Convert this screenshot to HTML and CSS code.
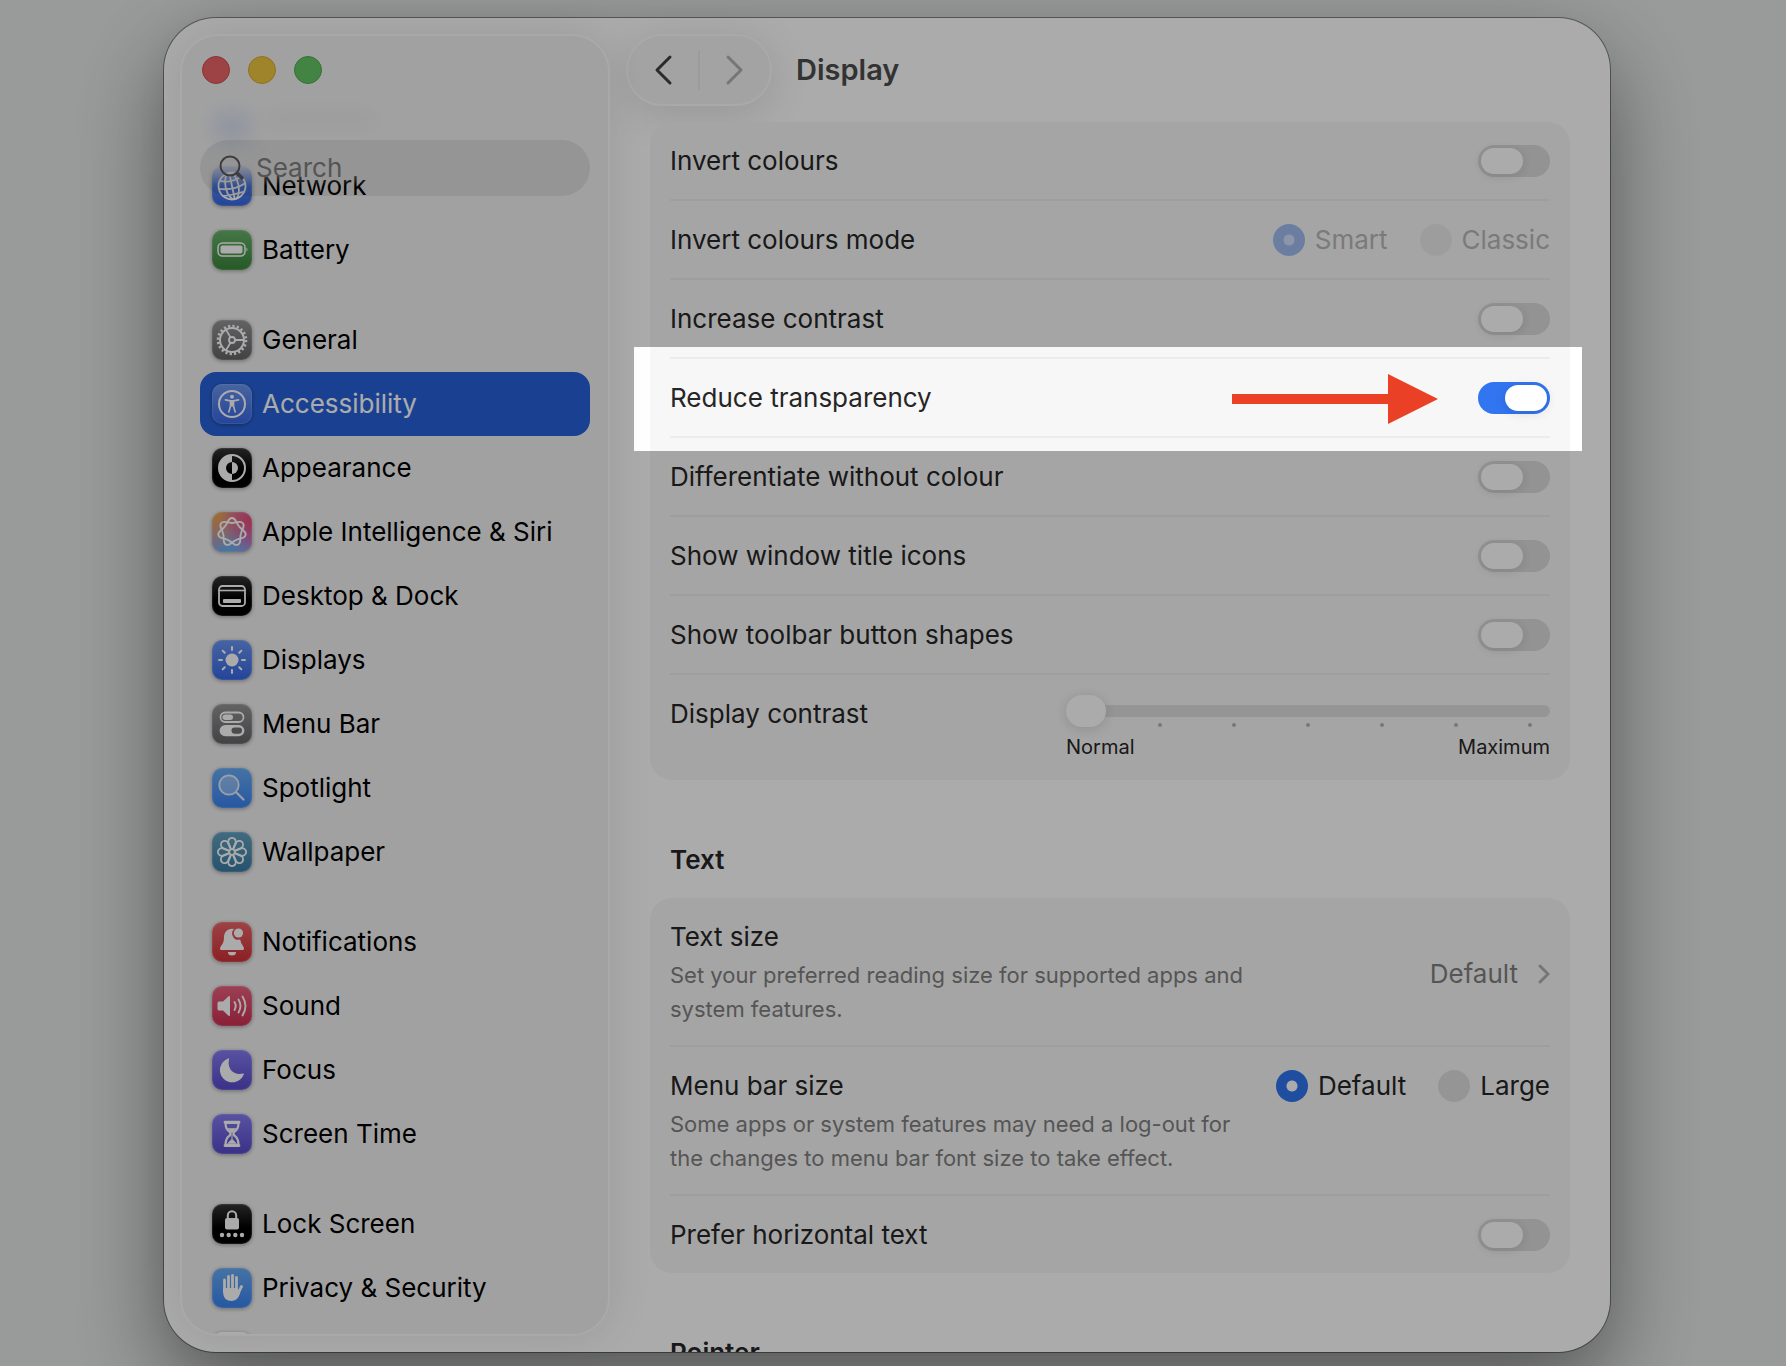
FILE: index.html
```html
<!DOCTYPE html>
<html lang="en-GB">
<head>
<meta charset="utf-8">
<title>Display</title>
<link rel="stylesheet" href="styles.css">
</head>
<body>

<div class="window">

  <aside class="sidebar">
    <div class="sidebar-top">
      <div class="fade"></div>
      <div class="ghost-icon"></div>
      <div class="ghost-text"></div>
      <div class="lights">
        <button class="light red" aria-label="Close"></button>
        <button class="light yellow" aria-label="Minimise"></button>
        <button class="light green" aria-label="Zoom"></button>
      </div>
      <label class="search">
        <svg width="28" height="28" viewBox="0 0 28 28" fill="none" stroke="#5a5a5e" stroke-width="2"><circle cx="12" cy="12" r="9.5"/><path d="M19 19l6 6" stroke-width="3.5"/></svg>
        <input type="search" placeholder="Search" aria-label="Search">
      </label>
    </div>

    <nav class="menu">
      <ul>
        <li><a href="#"><span class="icon blue"><svg viewBox="0 0 40 40" fill="none" stroke="#fff" stroke-width="1.8"><g transform="rotate(-12 20 20)"><circle cx="20" cy="20" r="13.5"/><ellipse cx="20" cy="20" rx="6.5" ry="13.5"/><path d="M20 6.5v27M6.5 20q13.500 5 27 0M9 12.500q11 5 22 0M9 28q11 1 22 0"/></g></svg></span>Network</a></li>
        <li><a href="#"><span class="icon green-tile"><svg viewBox="0 0 40 40"><rect x="6" y="13" width="27" height="13" rx="4.500" fill="none" stroke="#fff" stroke-width="1.500"/><rect x="8.500" y="15.500" width="22" height="8" rx="2" fill="#fff"/><path d="M34.500 17.500q2 2 0 4z" fill="#fff"/></svg></span>Battery</a></li>
      </ul>
      <ul>
        <li><a href="#"><span class="icon gray"><svg viewBox="0 0 40 40" fill="none" stroke="#fff"><circle cx="20" cy="20" r="14" stroke-width="2.600" stroke-dasharray="2.200 2.198"/><circle cx="20" cy="20" r="12" stroke-width="2"/><circle cx="20" cy="20" r="3" stroke-width="1.800"/><path d="M23 20h9M18.500 17.400L14 9.600M18.500 22.600L14 30.400" stroke-width="1.800"/></svg></span>General</a></li>
        <li><a href="#" class="active"><span class="icon blue"><svg viewBox="0 0 40 40" fill="none" stroke="#fff" stroke-linecap="round"><circle cx="20" cy="20" r="13" stroke-width="2"/><circle cx="20" cy="12.800" r="2" fill="#fff" stroke="none"/><path d="M13.500 15.800l5 1h3l5-1" stroke-width="1.800"/><path d="M18.500 17v5l-1.700 6M21.500 17v5l1.700 6" stroke-width="1.600"/><path d="M18 16.500h4l-.5 6h-3z" fill="#fff" stroke="none"/></svg></span>Accessibility</a></li>
        <li><a href="#"><span class="icon black"><svg viewBox="0 0 40 40"><circle cx="20" cy="20" r="13" fill="none" stroke="#fff" stroke-width="2"/><path d="M20 7a13 13 0 0 0 0 26v-7a6 6 0 0 1 0-12z" fill="#fff"/><path d="M20 14a6 6 0 0 1 0 12z" fill="#fff"/></svg></span>Appearance</a></li>
        <li><a href="#"><span class="icon siri"><svg viewBox="-20 -20 40 40" fill="none" stroke="#fff" stroke-width="1.800"><path id="loop" d="M-7.040-5.610C-3.300-10.300-4-14 0-14S3.300-10.300 7.040-5.610"/><use href="#loop" transform="rotate(51.430)"/><use href="#loop" transform="rotate(102.860)"/><use href="#loop" transform="rotate(154.290)"/><use href="#loop" transform="rotate(205.710)"/><use href="#loop" transform="rotate(257.140)"/><use href="#loop" transform="rotate(308.570)"/></svg></span>Apple Intelligence &amp; Siri</a></li>
        <li><a href="#"><span class="icon black"><svg viewBox="0 0 40 40"><rect x="7" y="10" width="26" height="20" rx="3.500" fill="none" stroke="#fff" stroke-width="1.800"/><path d="M7 14.500h26" stroke="#fff" stroke-width="1.600"/><rect x="11" y="23" width="18" height="4" rx="1" fill="#fff"/></svg></span>Desktop &amp; Dock</a></li>
        <li><a href="#"><span class="icon blue"><svg viewBox="-20 -20 40 40" stroke="#fff" stroke-width="2" stroke-linecap="round"><circle r="6.500" fill="#fff" stroke="none"/><path d="M0-10v-3M0 10v3M-10 0h-3M10 0h3M7.200-7.200l2.100-2.100M-7.200-7.200l-2.100-2.100M7.200 7.200l2.100 2.100M-7.200 7.200l-2.100 2.100"/></svg></span>Displays</a></li>
        <li><a href="#"><span class="icon gray"><svg viewBox="0 0 40 40"><rect x="8.500" y="8.500" width="23" height="9.500" rx="4.750" fill="none" stroke="#fff" stroke-width="1.800"/><rect x="10.500" y="10.500" width="10.500" height="5.500" rx="2.750" fill="#fff"/><rect x="7.600" y="21" width="24.800" height="11.200" rx="5.600" fill="#fff"/><rect x="19.500" y="23.500" width="10.500" height="6.200" rx="3.100" fill="#707072"/></svg></span>Menu Bar</a></li>
        <li><a href="#"><span class="icon sky"><svg viewBox="0 0 40 40" stroke="#e4eefa" stroke-width="1.800" stroke-linecap="round"><circle cx="17" cy="17" r="9.700" fill="rgba(255,255,255,.3)"/><path d="M24.500 24.500l7 7" stroke-width="2.200"/></svg></span>Spotlight</a></li>
        <li><a href="#"><span class="icon teal"><svg viewBox="-20 -20 40 40" fill="none" stroke="#fff" stroke-width="1.800"><g id="petals"><path id="petal" d="M-1-3L-3.300-8.500A3.800 3.800 0 1 1 3.300-8.500L1-3"/><use href="#petal" transform="rotate(90)"/><use href="#petal" transform="rotate(180)"/><use href="#petal" transform="rotate(270)"/></g><use href="#petals" transform="rotate(45)"/><circle r="2.800"/></svg></span>Wallpaper</a></li>
      </ul>
      <ul>
        <li><a href="#"><span class="icon crimson"><svg viewBox="0 0 40 40" fill="#fff"><path d="M22 7a8 8 0 0 0-10 8q0 6-3 9-2 3 0 4h22q2-1 0-4-2-2-2.800-6.500A6.300 6.300 0 0 1 22 7zM16 30h8a4 3.500 0 0 1-8 0z"/><circle cx="26.500" cy="11" r="4.600"/></svg></span>Notifications</a></li>
        <li><a href="#"><span class="icon pink"><svg viewBox="0 0 40 40"><path d="M5.500 17q0-1.500 1.500-1.500h4l5.500-5.200q1.500-1 1.500 1v17.400q0 2-1.500 1L11 24.500H7q-1.500 0-1.500-1.500z" fill="#fff"/><path d="M22.500 16q2.400 4 0 8M26.500 13.500q4 6.500 0 13M30.500 10.500q6 9.500 0 19" fill="none" stroke="#fff" stroke-width="1.900" stroke-linecap="round"/></svg></span>Sound</a></li>
        <li><a href="#"><span class="icon purple"><svg viewBox="0 0 40 40"><path d="M16 8.500q1.500-.8 1 1C15 18 21 26 31 23.500q1.500 0 .5 1.500A12.300 12.300 0 1 1 16 8.500z" fill="#fff"/></svg></span>Focus</a></li>
        <li><a href="#"><span class="icon purple"><svg viewBox="0 0 40 40"><path d="M13.500 9h13q0 6-4 8.700-2 1.800 0 4Q26.500 24.500 26.500 31h-13q0-6.500 4-9.300 2-2.200 0-4Q13.500 15 13.500 9z" fill="none" stroke="#fff" stroke-width="2.200"/><path d="M13 8.200h14M13 31.600h14" stroke="#fff" stroke-width="2.800" stroke-linecap="round"/><path d="M16 14.500h8l-4 4.500zM20 20v5l4.500 4.500h-9L20 25z" fill="#fff" stroke="#fff" stroke-width=".6"/></svg></span>Screen Time</a></li>
      </ul>
      <ul>
        <li><a href="#"><span class="icon black"><svg viewBox="0 0 40 40" fill="#fff"><rect x="13" y="14" width="14" height="11.500" rx="2"/><path d="M15.800 15v-3.500a4.200 4.200 0 0 1 8.400 0V15" fill="none" stroke="#fff" stroke-width="2"/><circle cx="10" cy="31" r="2.200"/><circle cx="16.700" cy="31" r="2.200"/><circle cx="23.300" cy="31" r="2.200"/><circle cx="30" cy="31" r="2.200"/></svg></span>Lock Screen</a></li>
        <li><a href="#"><span class="icon sky"><svg viewBox="0 0 40 40" fill="none" stroke="#fff" stroke-width="2.800" stroke-linecap="round"><path d="M12.500 12v12M16.500 8.500v14M20.500 7.500v14M24.500 9.500v14M29.500 18.500l-3.500 7"/><path d="M11.100 20h14.800v5l3-3.500Q27 33 20 33q-8.900 0-8.900-9z" fill="#fff" stroke="none"/></svg></span>Privacy &amp; Security</a></li>
        <li><a href="#" aria-label="Touch ID"><span class="icon white"></span></a></li>
      </ul>
    </nav>
  </aside>

  <main class="content">
    <header class="toolbar">
      <div class="history">
        <button aria-label="Back"><svg width="20" height="32" viewBox="0 0 20 32"><path d="M17 3L4 16l13 13" stroke="#404040"/></svg></button>
        <button aria-label="Forward"><svg width="20" height="32" viewBox="0 0 20 32"><path d="M3 3l13 13L3 29" stroke="#b0b0b0"/></svg></button>
      </div>
      <h1>Display</h1>
    </header>

    <section class="group">
      <div class="row">
        <label for="invert">Invert colours</label>
        <input type="checkbox" class="toggle" id="invert">
      </div>
      <div class="row">
        <span>Invert colours mode</span>
        <div class="radios">
          <label><input type="radio" name="mode" checked disabled>Smart</label>
          <label><input type="radio" name="mode" disabled>Classic</label>
        </div>
      </div>
      <div class="row">
        <label for="contrast">Increase contrast</label>
        <input type="checkbox" class="toggle" id="contrast">
      </div>
      <div class="row focused">
        <label for="transparency">Reduce transparency</label>
        <input type="checkbox" class="toggle" id="transparency" checked>
        <!-- dims everything except this row -->
        <div class="spotlight">
          <svg width="206" height="50" viewBox="0 0 206 50" fill="#ea4025"><path d="M0 20h156V0l50 25-50 25V30H0z"/></svg>
        </div>
      </div>
      <div class="row">
        <label for="differentiate">Differentiate without colour</label>
        <input type="checkbox" class="toggle" id="differentiate">
      </div>
      <div class="row">
        <label for="titleIcons">Show window title icons</label>
        <input type="checkbox" class="toggle" id="titleIcons">
      </div>
      <div class="row">
        <label for="shapes">Show toolbar button shapes</label>
        <input type="checkbox" class="toggle" id="shapes">
      </div>
      <div class="row slider-row">
        <label for="displayContrast">Display contrast</label>
        <div class="slider">
          <input type="range" id="displayContrast" min="0" max="6" value="0">
          <div class="ticks"><i></i><i></i><i></i><i></i><i></i><i></i></div>
          <div class="ends"><span>Normal</span><span>Maximum</span></div>
        </div>
      </div>
    </section>

    <h2>Text</h2>

    <section class="group">
      <div class="row tall">
        <div class="info">
          <div>Text size</div>
          <p>Set your preferred reading size for supported apps and system features.</p>
        </div>
        <button class="value">Default
          <svg width="12" height="20" viewBox="0 0 12 20"><path d="M2 2l8 8-8 8"/></svg>
        </button>
      </div>
      <div class="row tall top">
        <div class="info">
          <div>Menu bar size</div>
          <p>Some apps or system features may need a log-out for the changes to menu bar font size to take effect.</p>
        </div>
        <div class="radios">
          <label><input type="radio" name="size" checked>Default</label>
          <label><input type="radio" name="size">Large</label>
        </div>
      </div>
      <div class="row">
        <label for="horizontal">Prefer horizontal text</label>
        <input type="checkbox" class="toggle" id="horizontal">
      </div>
    </section>

    <div class="rest">
      <h2>Pointer</h2>
    </div>
  </main>

</div>

</body>
</html>
```
FILE: styles.css
```css
* {
  box-sizing: border-box;
}

body {
  margin: 0;
  height: 100vh;
  padding: 18px 176px 14px 164px;
  overflow: hidden;
  background: #e5e7e7;
  font-family: Inter, "Liberation Sans", sans-serif;
  font-size: 26px;
  line-height: 32px;
  color: #262626;
}

button,
input {
  font: inherit;
  margin: 0;
  padding: 0;
  border: none;
  background: none;
}

.window {
  display: flex;
  height: 100%;
  padding: 16px 0 16px 16px;
  border-radius: 52px;
  background: #fff;
  box-shadow: 0 0 0 1px rgba(0, 0, 0, 0.4), 0 36px 90px rgba(0, 0, 0, 0.45);
}

/* sidebar */

.sidebar {
  position: relative;
  flex: none;
  width: 430px;
  padding: 118px 18px 0;
  overflow: hidden;
  border: 2px solid #fcfcfc;
  border-radius: 38px;
  background: #f1f1f1;
  box-shadow: 0 0 44px rgba(0, 0, 0, 0.1);
}

.sidebar-top {
  position: absolute;
  z-index: 1;
  top: 0;
  left: 0;
  right: 0;
  padding: 20px 18px 0;
}

.fade {
  position: absolute;
  inset: 0;
  bottom: 10px;
  background: linear-gradient(#f1f1f1 126px, rgba(241, 241, 241, 0));
}

.ghost-icon,
.ghost-text {
  position: absolute;
  top: 76px;
  left: 32px;
  width: 36px;
  height: 30px;
  background: rgba(60, 110, 230, 0.14);
  filter: blur(10px);
}

.ghost-text {
  left: 84px;
  width: 110px;
  height: 14px;
  background: rgba(0, 0, 0, 0.04);
}

.lights {
  position: relative;
  display: flex;
  gap: 18px;
  padding: 0 2px;
  margin-bottom: 56px;
}

.light {
  width: 28px;
  height: 28px;
  border-radius: 50%;
}

.red {
  background: #ec6467;
  border: 1px solid #d2484c;
}

.yellow {
  background: #efc540;
  border: 1px solid #d8a92a;
}

.green {
  background: #65c466;
  border: 1px solid #48ad4c;
}

.search {
  position: relative;
  display: flex;
  align-items: center;
  gap: 10px;
  height: 56px;
  padding: 0 18px;
  border-radius: 28px;
  background: rgba(0, 0, 0, 0.08);
}

.search input {
  flex: 1;
  min-width: 0;
  outline: none;
}

.search input::placeholder {
  color: #7f7f7f;
  opacity: 1;
}

.menu {
  color: #000;
}

.menu ul {
  list-style: none;
  margin: 0 0 26px;
  padding: 0;
}

.menu a {
  display: flex;
  align-items: center;
  gap: 10px;
  height: 64px;
  padding: 0 12px;
  border-radius: 16px;
  color: inherit;
  text-decoration: none;
}

.menu .active {
  background: #2862d8;
  color: #fff;
}

.icon {
  width: 40px;
  height: 40px;
  border-radius: 10px;
  box-shadow: 0 1px 4px rgba(0, 0, 0, 0.35), inset 0 0 1px 1px rgba(255, 255, 255, 0.15);
}

.icon svg {
  display: block;
}

.blue { background: linear-gradient(#6a95f2, #3767e4); }
.green-tile { background: linear-gradient(#69b269, #38853a); }
.gray { background: linear-gradient(#949496, #636366); }
.black { background: linear-gradient(#363636, #000 60%); }
.sky { background: linear-gradient(#69acf5, #3883f2); }
.teal { background: linear-gradient(#62a0c0, #387ca3); }
.crimson { background: linear-gradient(#ea6468, #cf3035); }
.pink { background: linear-gradient(#e9617f, #cc2f52); }
.purple { background: linear-gradient(#857af0, #574acb); }
.white { background: #fff; }

.siri {
  background:
    radial-gradient(circle at 100% 20%, #e9476f, transparent 60%),
    radial-gradient(circle at 0 0, #f0a73a, transparent 70%),
    radial-gradient(circle at 40% 100%, #63b5ee, transparent 70%),
    #bb80d8;
}

/* content */

.content {
  display: flex;
  flex-direction: column;
  flex: 1;
  min-width: 0;
  margin-bottom: -16px;
  padding: 0 40px;
}

.toolbar {
  display: flex;
  align-items: center;
  gap: 24px;
  margin: 0 0 16px -24px;
}

.history {
  display: flex;
  align-items: center;
  width: 146px;
  height: 72px;
  border: 2px solid #fcfcfc;
  border-radius: 36px;
  background: #f4f4f4;
  box-shadow: 0 8px 44px rgba(0, 0, 0, 0.12);
}

.history button {
  flex: 1;
  height: 40px;
}

.history button + button {
  border-left: 2px solid #e9e9e9;
}

.history svg,
.value svg {
  display: block;
  margin: auto;
  fill: none;
  stroke-width: 3;
  stroke-linecap: round;
  stroke-linejoin: round;
}

h1 {
  margin: 0;
  font-size: 29px;
  font-weight: 600;
  color: #4c4c4c;
}

h2 {
  margin: 64px 20px 22px;
  font-size: 26px;
  font-weight: 600;
  line-height: 32px;
}

.group {
  padding: 0 20px;
  border-radius: 22px;
  background: #f7f7f7;
}

.row {
  display: flex;
  align-items: center;
  justify-content: space-between;
  height: 79px;
  border-bottom: 2px solid #ececec;
}

.row:last-child {
  height: 77px;
  border-bottom: none;
}

.toggle {
  appearance: none;
  width: 72px;
  height: 32px;
  padding: 3px;
  border-radius: 16px;
  background: #dcdcdc;
}

.toggle::before {
  content: "";
  display: block;
  width: 42px;
  height: 26px;
  border-radius: 13px;
  background: #fff;
  box-shadow: 0 2px 12px rgba(0, 0, 0, 0.12);
}

.toggle:checked {
  background: #3175f0;
}

.toggle:checked::before {
  margin-left: auto;
}

.radios {
  display: flex;
  gap: 32px;
}

.radios label {
  display: flex;
  align-items: center;
  gap: 10px;
}

.radios input {
  appearance: none;
  width: 32px;
  height: 32px;
  border-radius: 50%;
  background: #dfdfdf;
}

.radios input:checked {
  background: radial-gradient(circle, #fff 5px, #2f74ee 6px);
}

.radios label:has(:disabled) {
  color: #b6b6b6;
}

.radios input:disabled {
  background: #ebebeb;
}

.radios input:checked:disabled {
  background: radial-gradient(circle, #d3deff 5px, #a0bdf2 6px);
}

.focused {
  position: relative;
}

.spotlight {
  position: absolute;
  z-index: 5;
  top: -12px;
  right: -32px;
  bottom: -15px;
  left: -36px;
  display: flex;
  align-items: center;
  justify-content: flex-end;
  padding-right: 144px;
  box-shadow: 0 0 0 3000px rgba(0, 0, 0, 0.33);
  pointer-events: none;
}

.row.slider-row {
  align-items: flex-start;
  height: 105px;
  padding-top: 20px;
}

.slider-row label {
  padding-top: 3px;
}

.slider {
  width: 55%;
}

.slider input {
  appearance: none;
  display: block;
  width: 100%;
  height: 32px;
}

.slider input::-webkit-slider-runnable-track {
  height: 12px;
  border-radius: 6px;
  background: #dfdfdf;
}

.slider input::-webkit-slider-thumb {
  appearance: none;
  width: 40px;
  height: 32px;
  margin-top: -10px;
  border-radius: 16px;
  background: #fff;
  box-shadow: 0 2px 14px rgba(0, 0, 0, 0.14);
}

.ticks {
  display: flex;
  justify-content: space-between;
  height: 4px;
  margin: -4px 18px 0 92px;
}

.ticks i {
  width: 4px;
  height: 4px;
  border-radius: 50%;
  background: #b4b4b4;
}

.ends {
  display: flex;
  justify-content: space-between;
  margin-top: 4px;
  font-size: 20px;
}

.row.tall {
  height: auto;
  padding: 23px 0 19px;
}

.row.top {
  align-items: flex-start;
}

.info p {
  max-width: 590px;
  margin: 5px 0 0;
  font-size: 22px;
  line-height: 34px;
  color: #7f7f7f;
}

.value {
  display: flex;
  align-items: center;
  gap: 20px;
  color: #7f7f7f;
}

.value svg {
  stroke: #b0b0b0;
}

/* clipped by the bottom edge of the window */
.rest {
  flex: 1 1 0;
  min-height: 0;
  overflow: hidden;
}
```
